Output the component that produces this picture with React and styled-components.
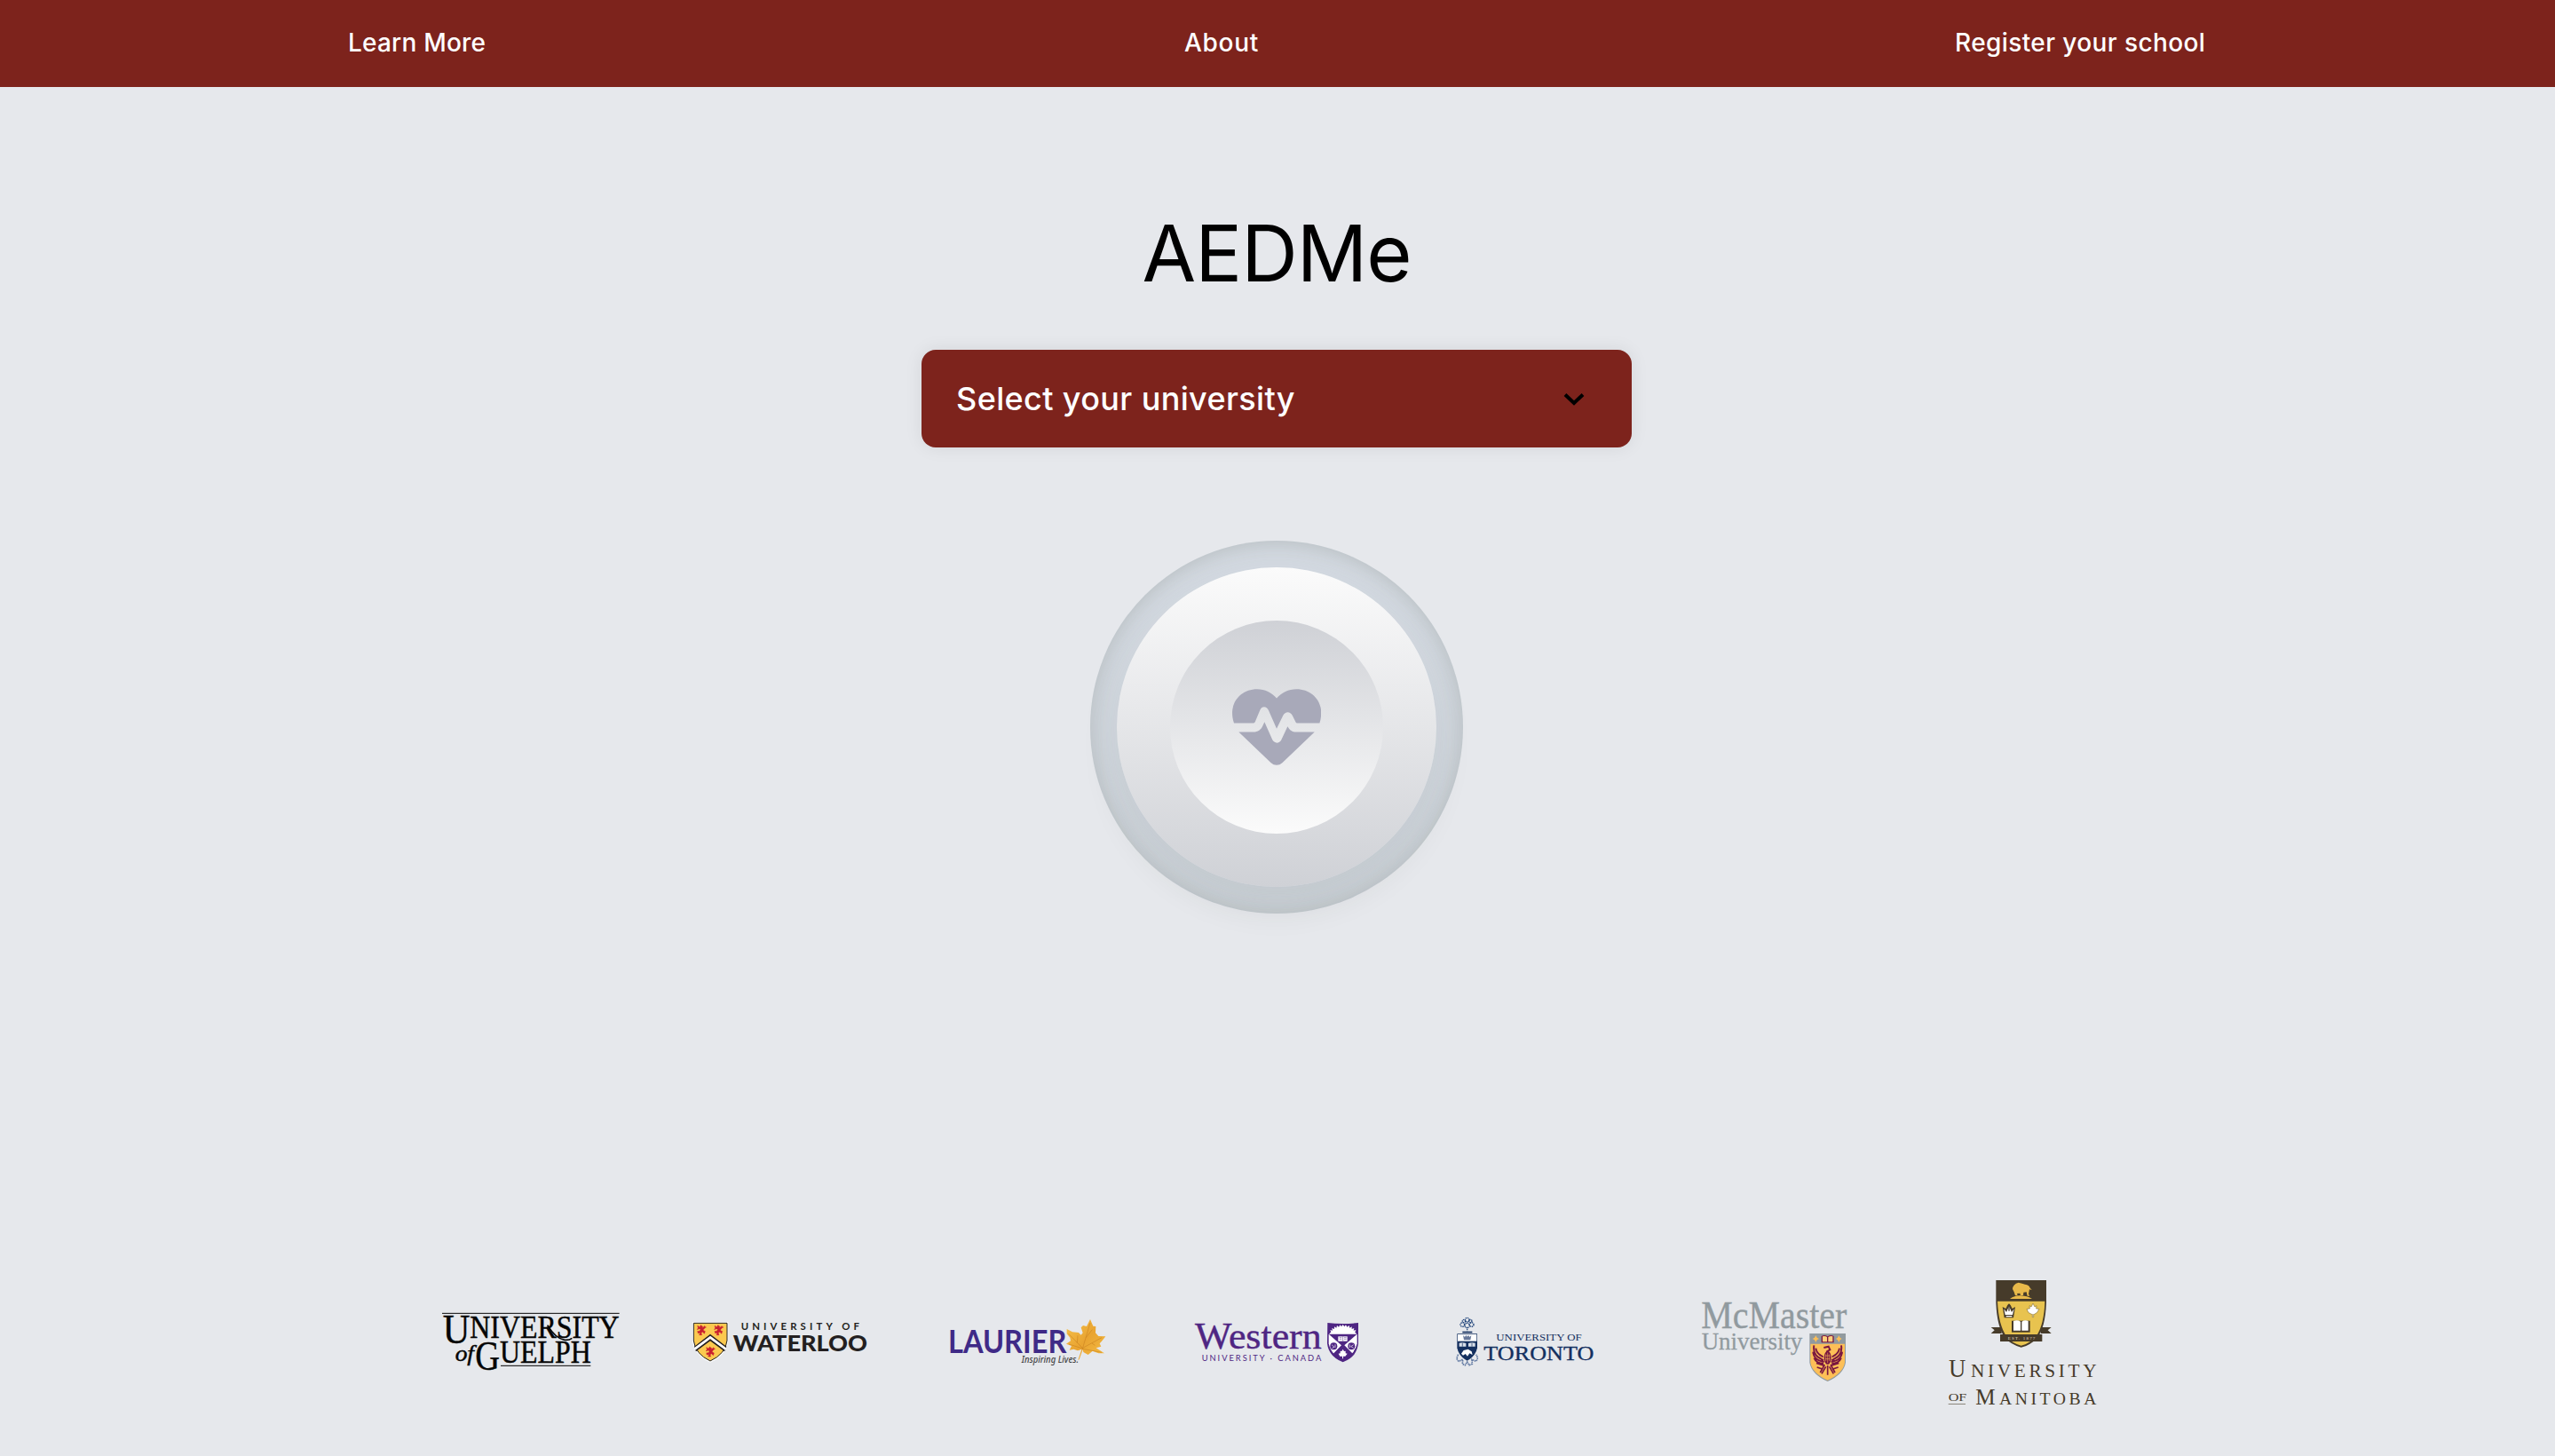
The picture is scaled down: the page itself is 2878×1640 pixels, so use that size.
import React from "react";
import styled, { createGlobalStyle } from "styled-components";

const GlobalStyle = createGlobalStyle`
  *, *::before, *::after { box-sizing: border-box; }
  body { margin: 0; background: #e6e8ec; font-family: Inter, "Open Sans", sans-serif; color: #000; }
`;

const Page = styled.div`
  min-height: 1640px;
  display: flex;
  flex-direction: column;
  background: #e6e8ec;
`;

const Nav = styled.nav`
  height: 98px;
  padding-bottom: 3px;
  display: flex;
  justify-content: space-around;
  align-items: center;
  background: #7d231c;
`;

const NavLink = styled.a`
  width: ${(p) => p.$width}px;
  color: #fff;
  font-size: 28px;
  font-weight: 500;
  line-height: 40px;
  letter-spacing: ${(p) => p.$spacing}px;
  white-space: nowrap;
  text-decoration: none;
`;

const Main = styled.main`
  flex: 1;
  display: flex;
  flex-direction: column;
  align-items: center;
  padding: 132px 2px 0 0;
`;

const Title = styled.h1`
  margin: 0 0 54px;
  font-size: 88px;
  font-weight: 400;
  line-height: 110px;
  letter-spacing: -1px;
`;

const Select = styled.button`
  width: 800px;
  height: 110px;
  padding: 0 53px 0 39px;
  display: flex;
  align-items: center;
  justify-content: space-between;
  border: 0;
  border-radius: 16px;
  background: #7d231c;
  box-shadow: 0 0 20px rgba(0, 0, 0, 0.08);
  color: #fff;
  font-family: inherit;
  font-size: 36px;
  font-weight: 500;
  letter-spacing: 0.37px;
`;

const Outer = styled.div`
  width: 420px;
  height: 420px;
  margin-top: 105px;
  display: grid;
  place-items: center;
  border-radius: 50%;
  background: #d6dce4;
  box-shadow: inset 0 0 30px rgba(60, 65, 50, 0.24);
`;

const Middle = styled.div`
  width: 360px;
  height: 360px;
  display: grid;
  place-items: center;
  border-radius: 50%;
  background: linear-gradient(#fbfbfb, #cfd1d6);
  box-shadow: 0 20px 40px rgba(50, 55, 40, 0.12);
`;

const Inner = styled.div`
  width: 240px;
  height: 240px;
  display: grid;
  place-items: center;
  border-radius: 50%;
  background: linear-gradient(#cfd1d6, #fbfbfb);
`;

const Footer = styled.footer`
  height: 210px;
  padding-right: 2px;
  display: flex;
  justify-content: center;
  gap: 80px;
`;

const Logo = styled.svg`
  width: 200px;
  height: 170px;
  flex: none;
  overflow: visible;
`;

const serif = '"Liberation Serif", serif';
const lato = "Lato, sans-serif";

const Word = ({ x, y, w, size, font = serif, children, ...rest }) => (
  <text x={x} y={y} textLength={w} lengthAdjust="spacingAndGlyphs" fontSize={size} fontFamily={font} {...rest}>
    {children}
  </text>
);

const Chevron = () => (
  <svg width="24" height="15" viewBox="0 0 24 15">
    <path d="M2 2.5 12 12 22 2.5" fill="none" stroke="#000" strokeWidth="4" />
  </svg>
);

const Heart = () => (
  <svg width="100.4" height="86" viewBox="564 590 301 257" fill="#a8a9b9">
    <path d="M570 705C563 686 563 664 566 654C573 617 606 590 648 590C675 590 697 602 714 621C731 602 754 590 781 590C823 590 856 617 863 654C866 672 864 690 859 705H783Q780 705 779 703L767 679C760 665 743 665 736 679L714 724L687 662C680 647 664 647 658 661L641 701Q639 705 635 705Z" />
    <path d="M586 735H636C650 735 662 727 667 714L673 701L699 760C706 775 723 775 730 761L751 716C758 729 767 735 780 735H842L733 839C722 849 706 849 695 839Z" />
  </svg>
);

const Guelph = () => (
  <Logo viewBox="0 0 600 510">
    <g transform="translate(-54 60)" fill="#050505" stroke="#050505" strokeWidth="1.4">
      <path d="M54 88H653M252 265H556" strokeWidth="3" />
      <Word x="56" y="190" w="92" size="140">U</Word>
      <Word x="148" y="170" w="505" size="109">NIVERSITY</Word>
      <path d="M410 128Q438 174 468 178Q484 179 493 172" fill="none" strokeWidth="5" />
      <Word x="98" y="249" w="64" size="76" fontStyle="italic">of</Word>
      <Word x="166" y="278" w="83" size="140">G</Word>
      <Word x="249" y="256" w="308" size="109">UELPH</Word>
    </g>
  </Logo>
);

const Lion = ({ x, y }) => (
  <path
    transform={`translate(${x} ${y})`}
    d="M-14-14L-7-10L-3-16L3-12L2-7L10-13L15-9L9-5L5 1L12 5L9 13L4 7L-2 10L1 17L-8 17L-5 10L-12 11L-14 5L-7 4L-3-2L-9-4L-15-1L-12-7Z"
    fill="#c8202f"
    stroke="#c8202f"
    strokeWidth="2"
    strokeDasharray="5 2"
  />
);

const Waterloo = () => (
  <Logo viewBox="0 0 600 510">
    <g transform="translate(-54 90)">
      <path d="M60 87H181V150Q176 199 120 224Q65 198 60 150Z" fill="#fff" />
      <path d="M64 91H177V150Q172 195 120 219Q69 195 64 150Z" fill="#fbc94f" stroke="#222" strokeWidth="3" />
      <Lion x="91" y="114" />
      <Lion x="149" y="114" />
      <Lion x="121" y="187" />
      <path d="M120 128L175 170L170 185L120 145L72 185L66 170Z" fill="#231f20" />
      <path d="M120 137L172 176L169 181L120 142L72 181L68 176Z" fill="#fff" stroke="#fff" strokeWidth="5" />
      <path d="M71 184L120 148L169 184" fill="none" stroke="#231f20" strokeWidth="5" />
      <text x="224" y="114" textLength="400" fontSize="34" fontFamily={lato} fontWeight="700" fill="#231f20">
        UNIVERSITY OF
      </text>
      <Word x="197" y="185" w="454" size="74" font={lato} fontWeight="900" fill="#231f20">WATERLOO</Word>
    </g>
  </Logo>
);

const Laurier = () => (
  <Logo viewBox="0 0 600 510">
    <g transform="translate(-24 120)">
      <defs>
        <linearGradient id="leaf" x1="0" y1="0" x2="1" y2="1">
          <stop offset="0" stopColor="#f6c34d" />
          <stop offset=".5" stopColor="#e9a431" />
          <stop offset="1" stopColor="#f4bd45" />
        </linearGradient>
      </defs>
      <Word x="54" y="163" w="400" size="107" font={lato} fontWeight="700" fill="#3f2a87">LAURIER</Word>
      <path
        d="M534 48L544 71L553 72L552 94L562 105L586 106L573 122L566 130L571 140L554 145L582 163L562 163L542 155L527 168L511 159L509 150L497 184L493 186L505 150L492 154L478 149L464 152L471 138L453 131L468 121L466 110L455 97L455 81L474 91L495 93L503 101L509 94L503 76L510 69L522 72Z"
        fill="url(#leaf)"
      />
      <path d="M507 151L534 60M509 145L573 110M509 146L461 97M509 147L462 132M509 148L573 160M520 110L541 83M490 128L492 103M540 129L550 136" fill="none" stroke="#c98220" strokeWidth="1.8" />
      <Word x="302" y="194" w="193" size="32" font={'"Noto Sans", sans-serif'} fontStyle="italic" fontWeight="500" fill="#444">
        Inspiring Lives.
      </Word>
    </g>
  </Logo>
);

const Western = () => (
  <Logo viewBox="0 0 600 510">
    <g transform="translate(-24 120)" fill="#4f2683">
      <Word x="48" y="147" w="428" size="125" stroke="#4f2683" strokeWidth="1.2">Western</Word>
      <text x="71" y="188" fontSize="28" fontFamily={lato} textLength="404">UNIVERSITY · CANADA</text>
      <path d="M496 60Q547 66 600 60V130Q594 177 548 193Q500 174 495 130Z" />
      <path d="M500 99H596V130Q589 165 548 187Q508 168 500 130Z" fill="#fff" />
      <path
        d="M501 98L508 91L505 84L513 86L511 78L519 81L519 73L526 77L528 69L534 74L539 67L543 73L548 66L553 73L558 67L562 74L569 69L571 77L578 73L578 81L586 78L584 86L592 84L589 92L595 98Z"
        fill="#fff"
      />
      <path d="M501 99H595L553 136L585 168L548 190L512 168L543 136Z" />
      <path d="M532 106H563V122H532Z" fill="#fff" />
      <path d="M548 106V122M536 110H544M536 115H544M552 110H560M552 115H560" stroke="#4f2683" strokeWidth="1.5" />
      <circle cx="517" cy="139" r="12" />
      <circle cx="577" cy="139" r="12" />
      <path d="M510 134L519 142L511 146M522 133V144M584 134L575 140L584 145M571 133V144" fill="none" stroke="#fff" strokeWidth="2" />
      <path d="M548 149L552 156L557 155V163L563 164L556 173L549 173V181H546V173L538 173L533 164L539 163V155L544 156Z" fill="#fff" />
    </g>
  </Logo>
);

const Toronto = () => (
  <Logo viewBox="0 0 600 510">
    <g transform="translate(6 120)" fill="#14305f">
      <g fill="none" stroke="#24477c" strokeWidth="4" strokeDasharray="4 2">
        <circle cx="82" cy="66" r="7" />
        <circle cx="98" cy="50" r="7" />
        <circle cx="113" cy="66" r="7" />
        <circle cx="98" cy="69" r="8" />
        <circle cx="87" cy="54" r="5" />
        <circle cx="109" cy="54" r="5" />
        <path d="M98 74V88" />
      </g>
      <path d="M82 89H115V94H82Z" />
      <path d="M64 97H132V145Q127 172 98 188Q69 172 64 145Z" />
      <path d="M66 99H130V122H66Z" fill="#fff" />
      <path d="M84 102L90 108L94 101L98 107L102 101L106 108L112 102L109 118H87Z" fill="#68799b" />
      <path d="M71 128Q82 125 94 129V140H71ZM102 129Q113 125 125 128V140H102Z" fill="#d8dfe9" />
      <path d="M82 128V140M114 128V140" stroke="#14305f" strokeWidth="2" />
      <path d="M78 164L86 153L101 149L113 157L116 168L106 163L99 173L92 165L84 170Z" fill="#fff" />
      <path d="M68 167Q58 183 70 190L83 184L82 199L91 203L98 192L105 203L115 199L114 184L127 190Q138 182 128 167" fill="none" stroke="#6179a2" strokeWidth="5" strokeDasharray="5 2" />
      <Word x="196" y="119" w="289" size="32">UNIVERSITY OF</Word>
      <Word x="154" y="185" w="372" size="72" stroke="#14305f" strokeWidth="1">TORONTO</Word>
    </g>
  </Logo>
);

const McMaster = () => (
  <Logo viewBox="0 0 600 510">
    <g transform="translate(6 60)" fill="#919a9f">
      <Word x="49" y="138" w="492" size="135" stroke="#919a9f" strokeWidth="1.2">McMaster</Word>
      <Word x="50" y="210" w="341" size="82" stroke="#919a9f" strokeWidth=".8">University</Word>
      <path d="M415 156H537V254Q530 294 476 318Q422 294 415 254Z" />
      <path d="M418 191H534V254Q528 290 476 314Q424 290 418 254Z" fill="#fdbf57" />
      <path d="M436 163L440 170L447 174L440 178L436 186L432 178L425 174L432 170ZM514 163L518 170L524 174L518 178L514 186L510 178L504 174L510 170Z" fill="#fdbf57" />
      <path d="M455 165Q466 159 476 166Q486 159 497 165V187H455Z" fill="#7a1740" />
      <path d="M459 166Q468 163 474 168V184H459ZM478 168Q486 163 493 166V184H478Z" fill="#fdcf7d" />
      <g fill="none" stroke="#7a1740" strokeWidth="6">
        <path d="M430 196Q426 222 443 235L462 247M436 206Q439 225 461 235M427 218Q429 241 449 248L464 252M430 238Q438 257 462 258M438 256L464 264" />
        <path d="M522 196Q526 222 509 235L490 247M516 206Q513 225 491 235M525 218Q523 241 503 248L488 252M522 238Q514 257 490 258M514 256L488 264" />
        <path d="M463 204L479 200L484 211L472 218" />
        <path d="M466 261L458 276L440 270M486 261L494 276L512 270M476 264V296M470 268L456 292M482 268L496 292M458 276L451 288M494 276L501 288" strokeWidth="5" />
      </g>
      <ellipse cx="476" cy="238" rx="12" ry="23" fill="#7a1740" />
      <path d="M476 221V256M468 231H484M468 242H484M470 226V249M482 226V249" stroke="#fdbf57" strokeWidth="1.6" />
    </g>
  </Logo>
);

const Manitoba = () => (
  <Logo viewBox="0 0 600 510">
    <g transform="translate(6 0)" fill="#463b2a">
      <path d="M188 195H224V216H188L200 205ZM392 195H356V216H392L380 205Z" />
      <path d="M205 36H375V110Q372 195 344 231Q325 254 290 263Q256 254 236 231Q208 195 205 110Z" />
      <path d="M210 107H370Q368 185 341 225Q323 249 290 257Q258 249 240 225Q213 185 210 107Z" fill="#e8c34f" />
      <path d="M261 66Q262 49 281 44Q294 47 303 50Q317 51 320 62L326 69L318 67L315 83L319 89H311L308 76L298 77L297 87H288L286 80L276 81L278 88H270L266 76Z" fill="#e8b94a" />
      <path d="M252 99Q270 86 290 88Q314 90 327 99Z" fill="#e8b94a" />
      <path d="M227 126L238 132L244 120L249 115L254 120L260 132L270 126L264 163H233Z" />
      <path d="M232 133L240 144L249 124L258 144L266 133L261 153H236ZM239 156H259V160H239Z" fill="#fff" />
      <path d="M249 117V140" stroke="#463b2a" strokeWidth="4" />
      <path d="M330 114L336 126L342 122L341 132L351 133L344 145L335 151H332V161H328V151H325L314 145L309 133L319 132L318 122L324 126Z" fill="#fff" stroke="#8b7636" strokeWidth="2" />
      <path d="M258 173H320V212H258Z" />
      <path d="M264 174Q278 169 288 176V206H264ZM292 176Q302 169 314 174V206H292Z" fill="#fff" />
      <path d="M219 219H361V243H219Z" />
      <text x="245" y="236" fontSize="15" fontFamily={serif} textLength="92" fill="#e7ddc3">EST. 1877</text>
      <Word x="45" y="362" w="58" size="86">U</Word>
      <text x="120" y="362" fontSize="64" fontFamily={serif} textLength="425">NIVERSITY</text>
      <Word x="44" y="443" w="62" size="38">OF</Word>
      <path d="M44 453H102V456H44Z" fill="#8c867c" />
      <Word x="136" y="455" w="67" size="77">M</Word>
      <text x="216" y="455" fontSize="59" fontFamily={serif} textLength="328">ANITOBA</text>
    </g>
  </Logo>
);

export default function App() {
  return (
    <>
      <GlobalStyle />
      <Page>
        <Nav>
          <NavLink $width={158} $spacing={0.2}>Learn More</NavLink>
          <NavLink $width={84} $spacing={0.7}>About</NavLink>
          <NavLink $width={284} $spacing={0.4}>Register your school</NavLink>
        </Nav>
        <Main>
          <Title>AEDMe</Title>
          <Select>
            Select your university
            <Chevron />
          </Select>
          <Outer>
            <Middle>
              <Inner>
                <Heart />
              </Inner>
            </Middle>
          </Outer>
        </Main>
        <Footer>
          <Guelph />
          <Waterloo />
          <Laurier />
          <Western />
          <Toronto />
          <McMaster />
          <Manitoba />
        </Footer>
      </Page>
    </>
  );
}
